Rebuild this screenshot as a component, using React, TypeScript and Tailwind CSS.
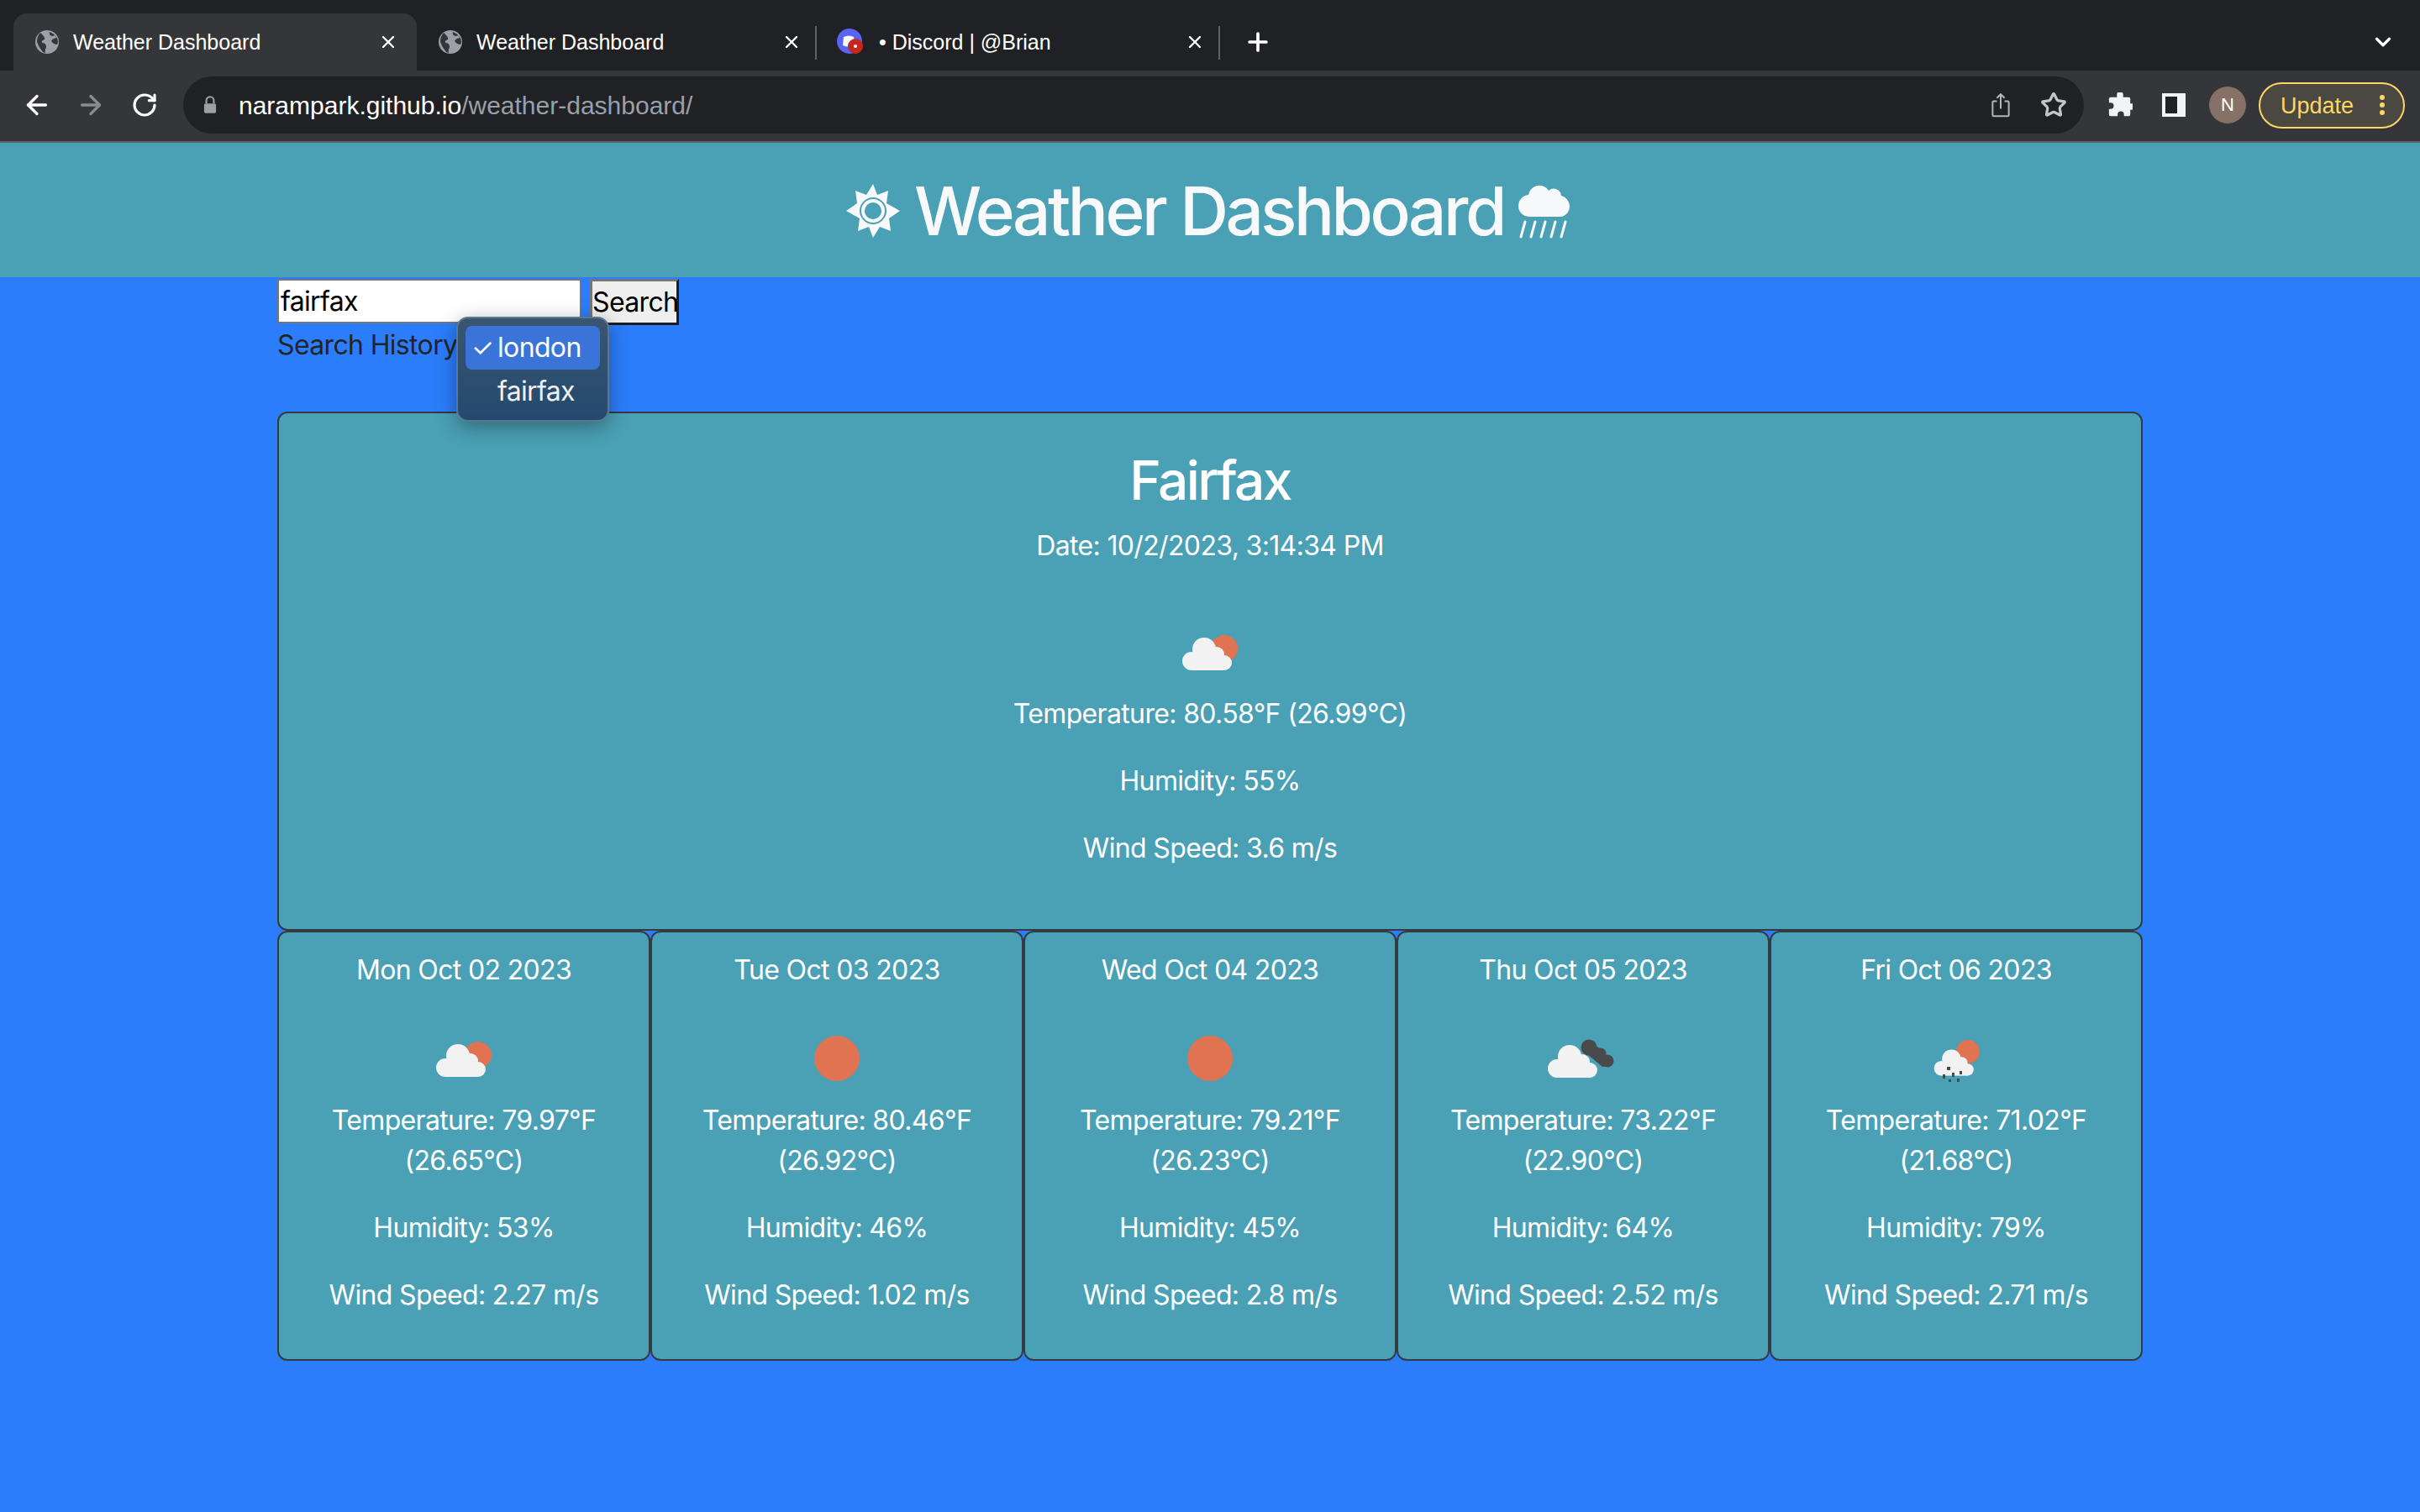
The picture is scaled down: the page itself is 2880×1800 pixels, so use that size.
import { ArrowLeft, ArrowRight, ChevronDown, Plus, RotateCw, Star, X } from 'lucide-react';

const forecast = [
  { date: 'Mon Oct 02 2023', icon: 'few', temp: '79.97°F', celsius: '26.65°C', humidity: '53%', wind: '2.27 m/s' },
  { date: 'Tue Oct 03 2023', icon: 'clear', temp: '80.46°F', celsius: '26.92°C', humidity: '46%', wind: '1.02 m/s' },
  { date: 'Wed Oct 04 2023', icon: 'clear', temp: '79.21°F', celsius: '26.23°C', humidity: '45%', wind: '2.8 m/s' },
  { date: 'Thu Oct 05 2023', icon: 'broken', temp: '73.22°F', celsius: '22.90°C', humidity: '64%', wind: '2.52 m/s' },
  { date: 'Fri Oct 06 2023', icon: 'rain', temp: '71.02°F', celsius: '21.68°C', humidity: '79%', wind: '2.71 m/s' },
];

function GlobeIcon() {
  return (
    <svg viewBox="0 0 28 28" className="w-[28px] h-[28px] shrink-0">
      <circle cx="14" cy="14" r="14" fill="#9aa0a6" />
      <path d="M6 3 Q12 8 11 11 Q7 12 8 15 Q13 15 13 20 Q11 24 12 27 L9 26 Q4 20 2 14 Q2 7 6 3Z" fill="#35363a" />
      <path d="M17 2 Q16 6 20 7 L24 6 L25 9 Q20 10 19 13 Q22 17 26 17 L27 14 Q27 6 17 2Z" fill="#35363a" />
    </svg>
  );
}

function DiscordIcon() {
  return (
    <svg viewBox="0 0 32 32" className="w-[32px] h-[32px] shrink-0">
      <circle cx="15" cy="15" r="15" fill="#5865f2" />
      <path d="M8 10 Q14 7 20 10 L22 20 Q14 23 7 20Z" fill="#fff" />
      <circle cx="22" cy="21" r="9" fill="#c5271f" />
      <circle cx="22" cy="21" r="2" fill="#fff" />
    </svg>
  );
}

function Tab({ title, active, favicon, discord }: { title: string; active?: boolean; favicon: React.ReactNode; discord?: boolean }) {
  return (
    <div className={`relative w-[480px] h-[68px] flex items-center pr-[22px] rounded-t-[16px] ${discord ? 'pl-[20px] gap-[18px]' : 'pl-[26px] gap-[17px]'} ${active ? 'bg-[#35363a]' : ''}`}>
      {favicon}
      <span className="flex-1 text-[25px] text-white whitespace-nowrap">{title}</span>
      <X className="w-[24px] h-[24px] text-white" strokeWidth={2.4} />
      {!active && <div className="absolute right-[4px] top-[15px] h-[40px] w-[2px] bg-[#5f6368]" />}
    </div>
  );
}

function BrowserChrome() {
  return (
    <div className="font-['Liberation_Sans',sans-serif] tracking-normal">
      <div className="h-[84px] bg-[#202124] flex pl-[16px] pt-[16px] relative">
        <Tab title="Weather Dashboard" active favicon={<GlobeIcon />} />
        <Tab title="Weather Dashboard" favicon={<GlobeIcon />} />
        <Tab title="• Discord | @Brian" discord favicon={<DiscordIcon />} />
        <Plus className="w-[34px] h-[34px] text-white ml-[24px] mt-[17px]" strokeWidth={2.6} />
        <ChevronDown className="absolute right-[29px] top-[35px] w-[30px] h-[30px] text-white" strokeWidth={2.6} />
      </div>
      <div className="h-[86px] bg-[#35363a] border-b-[2px] border-[#5f6368] flex items-center pl-[26px] pr-[17px] pb-[2px]">
        <ArrowLeft className="w-[36px] h-[36px] text-white" strokeWidth={2.2} />
        <ArrowRight className="w-[36px] h-[36px] text-[#8a8b8d] ml-[28px]" strokeWidth={2.2} />
        <RotateCw className="w-[32px] h-[32px] text-white ml-[30px]" strokeWidth={2.4} />
        <div className="ml-[30px] w-[2262px] h-[68px] rounded-full bg-[#202124] flex items-center pl-[24px] pr-[20px]">
          <svg viewBox="0 0 18 24" className="w-[16px] h-[22px]">
            <path d="M4 10V6a5 5 0 0 1 10 0v4" fill="none" stroke="#9aa0a6" strokeWidth="2.4" />
            <rect x="1" y="10" width="16" height="13" rx="2" fill="#9aa0a6" />
          </svg>
          <span className="ml-[26px] mt-[2px] text-[30px] text-white">narampark.github.io<span className="text-[#9aa0a6]">/weather-dashboard/</span></span>
          <svg viewBox="0 0 24 32" className="ml-auto w-[22px] h-[30px]" fill="none" stroke="#b4b5b7" strokeWidth="2.2">
            <path d="M7 11H3a1.5 1.5 0 0 0-1.500 1.500V29A1.500 1.500 0 0 0 3 30.500H21a1.500 1.500 0 0 0 1.500-1.500V12.500A1.500 1.500 0 0 0 21 11H17" />
            <path d="M12 21V2M7 7l5-5 5 5" />
          </svg>
          <Star className="ml-[36px] w-[32px] h-[32px] text-[#c4c5c7]" strokeWidth={2.4} />
        </div>
        <svg viewBox="0 0 30 32" className="ml-[28px] w-[30px] h-[30px]" fill="#f1f3f4">
          <path d="M11 3a4 4 0 0 1 8 0v3h7a2 2 0 0 1 2 2v6h2a4 4 0 0 1 0 8h-2v6a2 2 0 0 1-2 2h-6v-2a4 4 0 0 0-8 0v2H3a2 2 0 0 1-2-2v-7h2a4 4 0 0 0 0-8H1V8a2 2 0 0 1 2-2h8Z" />
        </svg>
        <svg viewBox="0 0 28 28" className="ml-[35px] w-[28px] h-[28px]">
          <rect width="28" height="28" fill="#f1f3f4" />
          <rect x="4" y="4" width="14" height="20" fill="#202124" />
        </svg>
        <div className="ml-[28px] w-[44px] h-[44px] rounded-full bg-[#877065] text-white text-[22px] flex items-center justify-center">N</div>
        <div className="ml-[15px] w-[174px] h-[55px] rounded-full border-[2px] border-[#fdd663] bg-[#4a4840] flex items-center pl-[24px] pr-[22px] text-[#fdd663]">
          <span className="mt-[2px] text-[27px]">Update</span>
          <div className="ml-auto flex flex-col gap-[3px]">
            <div className="w-[6px] h-[6px] rounded-full bg-[#fdd663]" />
            <div className="w-[6px] h-[6px] rounded-full bg-[#fdd663]" />
            <div className="w-[6px] h-[6px] rounded-full bg-[#fdd663]" />
          </div>
        </div>
      </div>
    </div>
  );
}

function CloudShape({ x = 0, y = 0, fill = '#f2f2f2' }: { x?: number; y?: number; fill?: string }) {
  return (
    <g transform={`translate(${x} ${y})`} fill={fill}>
      <circle cx="28" cy="61" r="11" />
      <circle cx="43" cy="47" r="14" />
      <circle cx="58" cy="53" r="9" />
      <circle cx="67" cy="63" r="9" />
      <rect x="28" y="55" width="39" height="17" />
    </g>
  );
}

function WeatherIcon({ type }: { type: string }) {
  return (
    <svg viewBox="0 0 100 100" className="w-[100px] h-[100px] mx-auto block blur-[0.6px]">
      {type === 'clear' && <circle cx="50" cy="50" r="27" fill="#e07351" />}
      {type === 'few' && (
        <>
          <circle cx="67" cy="46" r="16" fill="#e07351" />
          <CloudShape />
        </>
      )}
      {type === 'broken' && (
        <>
          <g fill="#4a4a4c">
            <circle cx="57" cy="37" r="9.500" />
            <circle cx="71" cy="44" r="6.500" />
            <circle cx="79" cy="53" r="7.500" />
            <path d="M49 40 L73 60 L79 59 L75 42 L59 30Z" />
          </g>
          <CloudShape x={-9} y={1} />
        </>
      )}
      {type === 'rain' && (
        <>
          <circle cx="64" cy="42" r="14" fill="#e07351" />
          <g transform="translate(10 13) scale(0.8)">
            <CloudShape />
          </g>
          <g fill="#4a4a4c">
            <rect x="39" y="60" width="4" height="4" />
            <rect x="34" y="69" width="3" height="5" />
            <rect x="45" y="67" width="3" height="5" />
            <rect x="54" y="65" width="3" height="4" />
            <rect x="41" y="75" width="3" height="3" />
            <rect x="51" y="74" width="3" height="4" />
          </g>
        </>
      )}
    </svg>
  );
}

function SunGlyph() {
  return (
    <svg viewBox="0 0 64 64" className="w-[64px] h-[64px]" fill="#f8f9fa">
      <path
        fillRule="evenodd"
        d="M32 0l5 13 13-5-2 15 16 9-13 9 2 15-13-5-8 13-5-13-13 5 2-15L0 32l13-9-2-15 13 5ZM32 16a16 16 0 1 0 0 32 16 16 0 0 0 0-32Z"
      />
      <path fillRule="evenodd" d="M32 18a14 14 0 1 0 0 28 14 14 0 0 0 0-28Zm0 4a10 10 0 1 1 0 20 10 10 0 0 1 0-20Z" />
    </svg>
  );
}

function RainGlyph() {
  return (
    <svg viewBox="0 0 66 66" className="w-[66px] h-[66px]" fill="#f8f9fa">
      <path d="M14 40a13 13 0 0 1-2-26 13 13 0 0 1 24-5 9 9 0 0 1 15 6 13 13 0 0 1 1 25Z" />
      <g stroke="#f8f9fa" strokeWidth="3" strokeLinecap="round">
        <path d="M8 46L3 64M20 46L15 64M32 46L27 64M44 46L39 64M56 46L51 64" />
      </g>
    </svg>
  );
}

function Stats({ temp, celsius, humidity, wind }: { temp: string; celsius: string; humidity: string; wind: string }) {
  return (
    <>
      <p className="mb-[32px]">Temperature: {temp} ({celsius})</p>
      <p className="mb-[32px]">Humidity: {humidity}</p>
      <p>Wind Speed: {wind}</p>
    </>
  );
}

export default function App() {
  return (
    <div className="min-h-[1800px] bg-[#2b7dfb] font-['Inter',sans-serif] text-[32px] leading-[48px] tracking-[-0.65px] text-[#212529]">
      <BrowserChrome />
      <header className="h-[160px] bg-[#4aa0b5] flex items-center justify-center gap-[17px] text-[#f8f9fa] pt-[2px]">
        <SunGlyph />
        <h1 className="text-[80px] leading-[96px] font-medium tracking-[-3.5px]">Weather Dashboard</h1>
        <RainGlyph />
      </header>

      <main className="w-[2220px] mx-auto">
        <form className="flex gap-[10px] pt-[2px] items-start">
          <input
            readOnly
            value="fairfax"
            className="w-[362px] h-[53px] bg-white text-black border-[2px] border-[#767676] rounded-[2px] px-[2px] outline-none"
          />
          <button type="button" className="w-[106px] h-[55px] bg-[#efefef] text-black border-[3px] border-t-[#767676] border-l-[#767676] border-r-[#1c1c1c] border-b-[#1c1c1c]">
            Search
          </button>
        </form>

        <div className="relative h-[103px]">
          <span>Search History</span>
          <div className="absolute left-[213px] top-[-10px] w-[182px] h-[125px] rounded-[14px] border-[2px] border-[#5a7891] bg-gradient-to-b from-[#3a5570] to-[#234a6e] shadow-[0_6px_24px_rgba(0,0,0,0.35)] p-[9px] text-white">
            <div className="h-[52px] rounded-[8px] bg-[#3b74d8] flex items-center leading-[52px]">
              <span className="w-[38px] pl-[7px] text-[30px]">✓</span>london
            </div>
            <div className="h-[52px] flex items-center pl-[38px] text-[#eef1f4]">fairfax</div>
          </div>
        </div>

        <section className="h-[618px] bg-[#4aa0b5] border-[2px] border-[#343a40] rounded-[12px] text-center text-white pt-[41px]">
          <h2 className="text-[64px] leading-[77px] font-medium tracking-[-2.6px]">Fairfax</h2>
          <p className="mt-[16px] mb-[52px]">Date: 10/2/2023, 3:14:34 PM</p>
          <WeatherIcon type="few" />
          <Stats temp="80.58°F" celsius="26.99°C" humidity="55%" wind="3.6 m/s" />
        </section>

        <div className="grid grid-cols-5">
          {forecast.map((day) => (
            <article key={day.date} className="h-[512px] bg-[#4aa0b5] border-[2px] border-[#343a40] rounded-[12px] text-center text-white pt-[21px] px-[24px]">
              <p className="mb-[31px]">{day.date}</p>
              <WeatherIcon type={day.icon} />
              <Stats temp={day.temp} celsius={day.celsius} humidity={day.humidity} wind={day.wind} />
            </article>
          ))}
        </div>
      </main>
    </div>
  );
}
